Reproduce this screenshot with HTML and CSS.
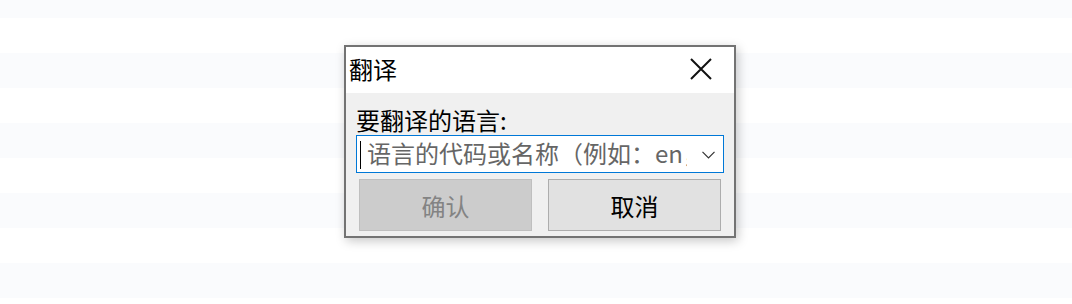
FILE: index.html
```html
<!DOCTYPE html>
<html lang="zh-CN">
<head>
<meta charset="utf-8">
<title>翻译</title>
<link rel="stylesheet" href="styles.css">
</head>
<body>
<div class="stage">
  <div class="dialog">
    <div class="titlebar">
      <span class="title">翻译</span>
      <span class="close" aria-label="关闭">
        <svg width="22" height="22" viewBox="0 0 22 22"><path d="M1 1L21 21M21 1L1 21" stroke="#111" stroke-width="2" fill="none"/></svg>
      </span>
    </div>
    <div class="content">
      <div class="label">要翻译的语言:</div>
      <div class="combo">
        <span class="caret"></span>
        <span class="placeholder">语言的代码或名称（例如：en，zh-CN）</span>
        <svg class="chevron" width="13" height="8" viewBox="0 0 13 8"><path d="M0.5 0.8L6.5 6.8L12.5 0.8" stroke="#333" stroke-width="1.2" fill="none"/></svg>
      </div>
      <div class="buttons">
        <button class="btn btn-disabled" disabled>确认</button>
        <button class="btn">取消</button>
      </div>
    </div>
  </div>
</div>
</body>
</html>
```

FILE: styles.css
```css
html {
  margin: 0;
  padding: 0;
  background-color: #ffffff;
  background-image: linear-gradient(to bottom, #fafbfd 0, #fafbfd 35px, #ffffff 35px, #ffffff 70px);
  background-size: 100% 70px;
  background-repeat: repeat;
  background-position: 0 -17px;
}
body {
  margin: 0;
  padding: 0;
  width: 1072px;
  height: 304px;
  overflow: hidden;
  font-family: "Noto Sans CJK SC", "Noto Sans", sans-serif;
}
.stage {
  padding: 45px 0 0 344px;
}
.dialog {
  width: 388px;
  border: 2px solid #737373;
  background: #f0f0f0;
  box-shadow: 2px 3px 10px rgba(0, 0, 0, 0.22);
}
.titlebar {
  height: 46px;
  background: #ffffff;
  display: flex;
  align-items: center;
  justify-content: space-between;
}
.title {
  padding-left: 3px;
  font-size: 24px;
  line-height: 28px;
  color: #000;
  margin-top: -2px;
}
.close {
  width: 22px;
  height: 22px;
  margin-right: 22px;
  display: flex;
  margin-top: -2px;
}
.content {
  padding: 11px 10px 5px 10px;
  display: flex;
  flex-direction: column;
}
.label {
  font-size: 24px;
  line-height: 31px;
  color: #000;
}
.combo {
  height: 36px;
  border: 1px solid #0078d7;
  background: #ffffff;
  display: flex;
  align-items: center;
}
.caret {
  width: 1px;
  height: 28px;
  background: #000;
  margin-left: 3px;
  margin-top: 2px;
}
.placeholder {
  margin-left: 6px;
  width: 320px;
  overflow: hidden;
  white-space: nowrap;
  font-size: 24px;
  line-height: 30px;
  color: #666666;
  margin-top: -3px;
}
.chevron {
  margin-left: 15px;
  margin-top: 2px;
}
.buttons {
  display: flex;
  gap: 16px;
  padding: 6px 3px 0 3px;
}
.btn {
  flex: 1;
  height: 52px;
  margin: 0;
  padding: 0;
  border: 1px solid #adadad;
  background: #e1e1e1;
  font-family: "Noto Sans CJK SC", "Noto Sans", sans-serif;
  font-size: 24px;
  color: #000;
}
.btn-disabled {
  background: #cccccc;
  border-color: #bfbfbf;
  color: #838383;
}
```
